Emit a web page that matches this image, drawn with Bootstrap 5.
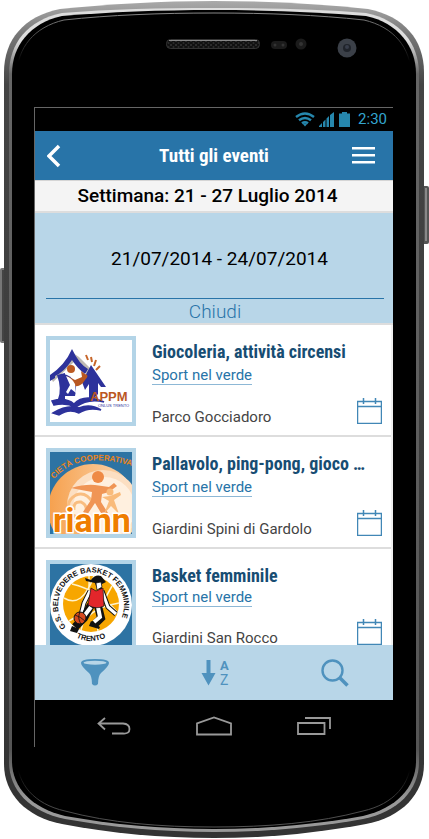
<!DOCTYPE html>
<html lang="it">
<head>
<meta charset="utf-8">
<meta name="viewport" content="width=device-width, initial-scale=1">
<title>Tutti gli eventi</title>
<link href="https://cdn.jsdelivr.net/npm/bootstrap@5.3.0/dist/css/bootstrap.min.css" rel="stylesheet">
<style>
  :root { --blue: #2874a8; --sky: #b8d6e8; --icon: #4f92be; }
  body { font-family: Roboto, "Liberation Sans", sans-serif; background: #fff; color: #000; }
  svg { display: block; }
  .phone { padding: 107px 36px 92px 34px; }
  .phone-shell { inset: 0; width: 100%; height: 100%; }
  .screen { border-left: 1px solid #666; border-top: 1px solid #666; }
  .status-bar { height: 23px; padding-right: 6px; color: #33a5cf; font-size: 15px; line-height: 23px; }
  .app-header { height: 50px; background: var(--blue); border-bottom: 1px solid #d5d5d5; padding: 0 14px 0 8px; color: #fff; }
  .condensed { font-family: "Liberation Sans Narrow", "Roboto Condensed", "Liberation Sans", sans-serif; font-weight: 700; }
  .app-title { font-size: 19px; line-height: 24px; }
  .plain-btn { background: none; border: 0; padding: 4px; color: inherit; }
  .back-btn { width: 37px; }
  .week { background: #f4f4f4; border-bottom: 2px solid #ddd; font-size: 19px; font-weight: 500; line-height: 30px; padding-right: 13px; }
  .range { background: var(--sky); border-bottom: 2px solid #ddd; padding: 0 9px 0 11px; }
  .range-dates { font-size: 19px; line-height: 24px; padding: 34px 0 27px 9px; border-bottom: 1px solid var(--blue); }
  .close-btn { font-size: 19px; font-weight: 300; line-height: 22px; padding: 2px 0 0; color: var(--blue); }
  .events { background: #fff; border-right: 2px solid #f0f0f0; }
  .event { padding: 11px 9px 9px 11px; gap: 16px; border-bottom: 2px solid #ddd; }
  .event-logo { width: 90px; height: 90px; border: 4px solid #b3d4e7; }
  .event-title { font-size: 18px; line-height: 20px; margin: 6px 0 0; color: #174d73; }
  .event-link { font-size: 15px; line-height: 17px; margin-top: 5px; color: var(--blue); border-bottom: 1px solid #8db8d6; }
  .event-place { font-size: 15px; line-height: 14px; color: #444; }
  .event-foot { margin-top: 13px; }
  .event-last { max-height: 96px; overflow: hidden; border: 0; }
  .event-last .event-link { margin-top: 3px; }
  .event-last .event-foot { margin-top: 12px; }
  .tool-bar { background: var(--sky); height: 55px; color: var(--icon); padding: 0 40px 0 42px; }
  .soft-keys { height: 47px; color: #999; padding: 4px 58px 0; }
</style>
<script src="https://cdn.jsdelivr.net/npm/bootstrap@5.3.0/dist/js/bootstrap.bundle.min.js"></script>
</head>
<body>
<div class="phone position-relative">
  <svg class="phone-shell position-absolute" viewBox="0 0 429 839" preserveAspectRatio="none" aria-hidden="true">
    <defs>
      <linearGradient id="rim" x1="0" y1="0" x2="0" y2="1">
        <stop offset="0" stop-color="#aaa"/><stop offset=".04" stop-color="#777"/><stop offset=".1" stop-color="#444"/><stop offset="1" stop-color="#333"/>
      </linearGradient>
      <linearGradient id="shine" x1="0" y1="0" x2="0" y2="1">
        <stop offset="0" stop-color="#ddd"/><stop offset=".04" stop-color="#ddd"/><stop offset=".08" stop-color="#666"/><stop offset=".9" stop-color="#555"/><stop offset=".96" stop-color="#999"/><stop offset="1" stop-color="#999"/>
      </linearGradient>
      <linearGradient id="glint" x1="0" y1="0" x2="0" y2="1">
        <stop offset="0" stop-color="#888"/><stop offset=".03" stop-color="#444"/><stop offset=".06" stop-color="#000"/><stop offset=".93" stop-color="#000"/><stop offset=".97" stop-color="#444"/><stop offset="1" stop-color="#555"/>
      </linearGradient>
      <pattern id="mesh" width="5" height="4" patternUnits="userSpaceOnUse"><rect width="5" height="4" fill="#111"/><circle cx="1" cy="1" r="1" fill="#333"/><circle cx="3.500" cy="3" r="1" fill="#2c2c2c"/></pattern>
    </defs>
    <rect x="0" y="268" width="6" height="75" rx="2" fill="#777"/><rect x="2" y="270" width="2" height="71" fill="#444"/>
    <rect x="422" y="186" width="7" height="58" rx="2" fill="#555"/><rect x="425" y="188" width="2" height="53" fill="#888"/>
    <path d="M4 72C4 40 24 16 60 9C110 4 160 1 214 1S318 4 368 9C404 16 424 40 424 72V764C424 794 402 817 366 824C318 833 268 838 214 838S110 833 62 824C26 817 4 794 4 764Z" fill="url(#rim)"/>
    <path d="M9 74C9 43 28 20 62 13C110 9 160 8 214 8S318 9 366 13C400 20 419 43 419 74V762C419 790 398 812 363 819C318 827 268 832 214 832S110 827 65 819C30 812 9 790 9 762Z" fill="url(#shine)"/>
    <path d="M12 74C12 46 30 23 62 16C110 12 160 10 214 10S318 12 366 16C398 23 416 46 416 74V761C416 787 397 808 363 816C318 824 268 829 214 829S110 824 65 816C31 808 12 787 12 761Z"/>
    <path d="M17 75C17 48 34 27 64 20C110 15 160 13 214 13S318 15 364 20C394 27 411 48 411 75V758C411 784 394 804 363 811C318 823 268 827 214 827S110 823 65 811C34 804 17 784 17 758Z" stroke="url(#glint)"/>
    <rect x="166.500" y="39.500" width="93" height="9" rx="4" fill="url(#mesh)" stroke="#333"/><path d="M169 40.500H257" stroke="#888"/>
    <rect x="271" y="41" width="16" height="8" rx="4" fill="#1b1b1b"/><circle cx="275" cy="45" r="1.500" fill="#333"/><circle cx="283" cy="45" r="1.500" fill="#333"/>
    <circle cx="301" cy="44" r="5.500" fill="#1b1b1b"/><circle cx="301" cy="44" r="2" fill="#333"/>
    <circle cx="347" cy="48" r="9.500" fill="#3b4048"/><circle cx="347" cy="48" r="4" fill="#20242b"/><circle cx="347" cy="47" r="2" fill="#383e4b"/>
  </svg>

  <div class="screen position-relative">
    <div class="status-bar d-flex justify-content-end align-items-center">
      <svg width="20" height="15" viewBox="0 0 20 15" fill="none" stroke="#2687ad" stroke-width="2.400" aria-hidden="true"><path d="M1 5Q10-2 19 5M4 8.300Q10 3.500 16 8.300M7 11.300Q10 9 13 11.300"/><path d="M7.500 11.500L10 14.500l2.500-3z" fill="#2687ad" stroke="none"/></svg>
      <svg class="ms-1" width="15" height="15" viewBox="0 0 15 15" fill="#2687ad" aria-hidden="true"><path d="M0 15V14L3 11V15zM4 15V10L6.500 7.500V15zM7.500 15V6.500L10 4V15zM11 15V3L15 0V15z"/></svg>
      <svg class="ms-1 me-2" width="12" height="15" viewBox="0 0 12 15" fill="#2687ad" aria-hidden="true"><path d="M1 1.500H4V0H9V1.500H12V15H1z"/></svg>
      <span>2:30</span>
    </div>

    <header class="app-header d-flex align-items-center justify-content-between">
      <button class="plain-btn back-btn" type="button" aria-label="Indietro"><svg width="16" height="24" viewBox="0 0 16 24" fill="none" stroke="#fff" stroke-width="3.500"><path d="M12 2L2 12L12 22"/></svg></button>
      <h1 class="app-title condensed m-0">Tutti gli eventi</h1>
      <button class="plain-btn" type="button" aria-label="Menu"><svg width="23" height="17" viewBox="0 0 23 17" fill="#fff"><path d="M0 0H23V2.500H0zM0 7H23V9.500H0zM0 14H23V16.500H0z"/></svg></button>
    </header>

    <div class="week text-center">Settimana: 21 - 27 Luglio 2014</div>
    <section class="range text-center">
      <div class="range-dates">21/07/2014 - 24/07/2014</div>
      <button class="plain-btn close-btn d-block w-100" type="button">Chiudi</button>
    </section>

    <main class="events">
      <article class="event d-flex">
        <svg class="event-logo flex-shrink-0 bg-white" viewBox="0 0 82 82" role="img" aria-label="APPM">
          <path d="M1 38L23 13L29 17L46 34L41 38L24 22L3 42z" fill="#bdb9b3"/>
          <path d="M0 35Q15 25 22 9Q29 24 38 29L35 34Q28 29 22 20Q14 32 5 36V38L0 41z" fill="#2d329b"/>
          <path d="M7 35L15 33V59H8Q12 49 7 35z" fill="#2d329b"/>
          <path d="M32 42L41 25L56 47L51 47L48 43V54L44 58H39V44L35 50z" fill="#2d329b"/>
          <path d="M14 34Q20 35 25 42Q27 48 25 56L13 56z" fill="#2d329b"/>
          <circle cx="21" cy="29" r="4" fill="#bb5a23"/>
          <path d="M17 36L25 40L32 37L31 31L35 34Q40 35 35 40Q31 47 25 46L22 43z" fill="#b85721"/>
          <path d="M16 36Q22 38 25 44L26 53L21 49L18 54L16 52L20 45z" fill="#fff"/>
          <path d="M36 15l2 5M41 17l1 5M46 20l-2 6M50 26l-4 4" stroke="#c7662a" stroke-width="2"/>
          <path d="M2 61Q16 57 24 64Q34 53 54 62Q38 58 26 67Q15 62 4 65zM3 73Q18 64 29 68Q40 63 51 70Q38 67 29 73Q19 68 9 75z" fill="#2d329b" stroke="#2d329b" stroke-width="1.500"/>
          <text x="40" y="61" font-family="Liberation Sans" font-weight="700" font-size="13" fill="#bb571f">APPM</text>
          <text x="48" y="67" font-family="Liberation Sans" font-size="4" fill="#2d329b">ONLUS TRENTO</text>
        </svg>
        <div class="flex-grow-1 d-flex flex-column align-items-start overflow-hidden">
          <h2 class="event-title condensed text-truncate w-100 flex-shrink-0">Giocoleria, attività circensi</h2>
          <a class="event-link text-decoration-none" href="#verde1">Sport nel verde</a>
          <div class="event-foot w-100 d-flex justify-content-between align-items-end">
            <span class="event-place">Parco Gocciadoro</span>
            <button class="plain-btn p-0" type="button" aria-label="Aggiungi al calendario"><svg width="25" height="26" viewBox="0 0 25 26" fill="none" stroke="#4187b6"><path d="M.5 3.500H24.500V25.500H.5zM0 8.500H25M6.500 0V6M18.500 0V6" stroke-width="1.500"/></svg></button>
          </div>
        </div>
      </article>

      <article class="event d-flex">
        <svg class="event-logo flex-shrink-0" viewBox="0 0 82 82" role="img" aria-label="Società Cooperativa Arianna">
          <defs><path id="coopArc" d="M4 27Q28-2 82 14"/><linearGradient id="peach"><stop offset="0" stop-color="#f6a04d"/><stop offset="1" stop-color="#fcdbb7"/></linearGradient></defs>
          <rect width="82" height="82" fill="#2d73a3"/>
          <circle cx="43" cy="57" r="45" fill="url(#peach)"/><circle cx="53" cy="54" r="36" fill="#fcdfc2"/><circle cx="54" cy="56" r="31" fill="#fff0df"/>
          <path d="M24 58Q23 49 31 50Q39 54 35 62Q27 69 20 60Q15 49 26 43Q36 39 43 51" fill="none" stroke="#f9bd80" stroke-width="3"/>
          <circle cx="48" cy="25" r="6" fill="#ef8a45"/>
          <path d="M21 36Q35 32 45 33L59 35L64 31L67 34L59 40L52 42L51 50L58 61H51L45 51L37 63L33 60L41 48L42 40Q31 38 21 36z" fill="#f09555"/>
          <circle cx="60" cy="40" r="3.500" fill="#f9bb7b"/><path d="M52 45L60 44L70 40L71 43L64 48L69 62L61 54L54 62L59 49z" fill="#f9bb7b"/>
          <text font-family="Liberation Sans" font-weight="700" font-size="8" fill="#ed8419"><textPath href="#coopArc">CIETÀ COOPERATIVA</textPath></text>
          <text x="3" y="80" font-family="Roboto" font-weight="700" font-size="34" fill="#ef7d00" stroke="#fff" stroke-width="3" paint-order="stroke">riann</text>
        </svg>
        <div class="flex-grow-1 d-flex flex-column align-items-start overflow-hidden">
          <h2 class="event-title condensed text-truncate w-100 flex-shrink-0">Pallavolo, ping-pong, gioco …</h2>
          <a class="event-link text-decoration-none" href="#verde2">Sport nel verde</a>
          <div class="event-foot w-100 d-flex justify-content-between align-items-end">
            <span class="event-place">Giardini Spini di Gardolo</span>
            <button class="plain-btn p-0" type="button" aria-label="Aggiungi al calendario"><svg width="25" height="26" viewBox="0 0 25 26" fill="none" stroke="#4187b6"><path d="M.5 3.500H24.500V25.500H.5zM0 8.500H25M6.500 0V6M18.500 0V6" stroke-width="1.500"/></svg></button>
          </div>
        </div>
      </article>

      <article class="event event-last d-flex">
        <svg class="event-logo flex-shrink-0" viewBox="0 0 82 82" role="img" aria-label="G.S. Belvedere Basket Femminile Trento">
          <defs><path id="clubArc" d="M16 63A33 33 0 1 1 66 63"/><path id="cityArc" d="M19 69Q41 85 63 69"/></defs>
          <rect width="82" height="82" fill="#2d73a3"/><circle cx="41" cy="41" r="41" fill="#fff"/><circle cx="41" cy="40" r="28" fill="#f7a600"/>
          <path d="M14 34Q32 45 44 12M19 57Q41 47 39 12M31 66Q35 45 69 39M22 20Q48 26 68 49M48 67Q44 53 62 22" fill="none" stroke="#fff3cc" stroke-width="1.500"/>
          <path d="M41 16Q45 10 51 12L56 18L52 20L52 25L47 25L45 19L36 17L35 14z" fill="#111"/>
          <path d="M46 19L51 18L52 23L47 26z" fill="#fff" stroke="#111" stroke-width=".7"/>
          <path d="M40 27L34 39L31 51M52 27L58 43L66 50" fill="none" stroke="#111" stroke-width="5"/><path d="M40 27L34 39L31 51M52 27L58 43L66 50" fill="none" stroke="#fff" stroke-width="3"/>
          <path d="M41 41L34 54L25 63M48 42L51 54L44 61" fill="none" stroke="#111" stroke-width="8"/><path d="M41 43L35 51L28 58M48 43L50 53L44 58" fill="none" stroke="#fff" stroke-width="4"/>
          <path d="M41 24L46 27L53 24L54 42Q46 46 38 41z" fill="#e2262b" stroke="#111" stroke-width=".7"/>
          <path d="M22 62L29 65L27 69L20 67zM41 57L50 63L49 65L39 62z" fill="#111"/>
          <circle cx="30" cy="54" r="6" fill="#d6491e" stroke="#111"/><path d="M25 51Q31 53 35 57M30 48Q27 54 31 60" fill="none" stroke="#111" stroke-width=".8"/>
          <g font-family="Liberation Sans" font-weight="700" fill="#111"><text font-size="7.500"><textPath href="#clubArc">G.S. BELVEDERE BASKET FEMMINILE</textPath></text><text font-size="7.500"><textPath href="#cityArc" startOffset="50%" text-anchor="middle">TRENTO</textPath></text></g>
        </svg>
        <div class="flex-grow-1 d-flex flex-column align-items-start">
          <h2 class="event-title condensed text-truncate w-100 flex-shrink-0">Basket femminile</h2>
          <a class="event-link text-decoration-none" href="#verde3">Sport nel verde</a>
          <div class="event-foot w-100 d-flex justify-content-between align-items-end">
            <span class="event-place">Giardini San Rocco</span>
            <button class="plain-btn p-0" type="button" aria-label="Aggiungi al calendario"><svg width="25" height="26" viewBox="0 0 25 26" fill="none" stroke="#4187b6"><path d="M.5 3.500H24.500V25.500H.5zM0 8.500H25M6.500 0V6M18.500 0V6" stroke-width="1.500"/></svg></button>
          </div>
        </div>
      </article>
    </main>

    <nav class="tool-bar d-flex align-items-center justify-content-between" aria-label="Strumenti">
      <button class="plain-btn" type="button" aria-label="Filtra"><svg width="28" height="28" viewBox="0 0 28 28"><path d="M0 4Q0 0 14 0T28 4Q28 7 20 14Q17 17 17 25Q14 28 11 25Q11 17 8 14Q0 7 0 4z" fill="currentColor"/><ellipse cx="14" cy="3.700" rx="11.500" ry="2" fill="#b8d6e8"/></svg></button>
      <button class="plain-btn" type="button" aria-label="Ordina"><svg width="28" height="28" viewBox="0 0 28 28" fill="currentColor"><path d="M5.500 1H9.500V14H14.500L7.500 26.500L.5 14H5.500z"/><text x="19" y="11" font-family="Roboto" font-weight="700" font-size="13">A</text><text x="19" y="26" font-family="Roboto" font-size="14">Z</text></svg></button>
      <button class="plain-btn" type="button" aria-label="Cerca"><svg width="28" height="28" viewBox="0 0 28 28" fill="none" stroke="currentColor"><circle cx="11.500" cy="11.500" r="10" stroke-width="2.400"/><path d="M18.500 18.500L26.500 26.500" stroke-width="3.600"/></svg></button>
    </nav>
    <nav class="soft-keys d-flex align-items-center justify-content-between" aria-label="Sistema">
      <button class="plain-btn" type="button" aria-label="Indietro"><svg width="34" height="18" viewBox="0 0 34 18" fill="none" stroke="currentColor" stroke-width="1.800"><path d="M1.500 6.500H26Q32.500 7 32.500 12T26 16.500H15M8 1L1.500 6.500L8 12.500"/></svg></button>
      <button class="plain-btn" type="button" aria-label="Home"><svg width="36" height="20" viewBox="0 0 36 20" fill="none" stroke="currentColor" stroke-width="1.800"><path d="M1 18.500V7.500L18 1.500L35 7.500V18.500z"/></svg></button>
      <button class="plain-btn" type="button" aria-label="App recenti"><svg width="34" height="18" viewBox="0 0 34 18" fill="none" stroke="currentColor" stroke-width="1.800"><path d="M1 6H27.500V17H1zM8 1H33V12"/></svg></button>
    </nav>
  </div>
</div>
</body>
</html>
